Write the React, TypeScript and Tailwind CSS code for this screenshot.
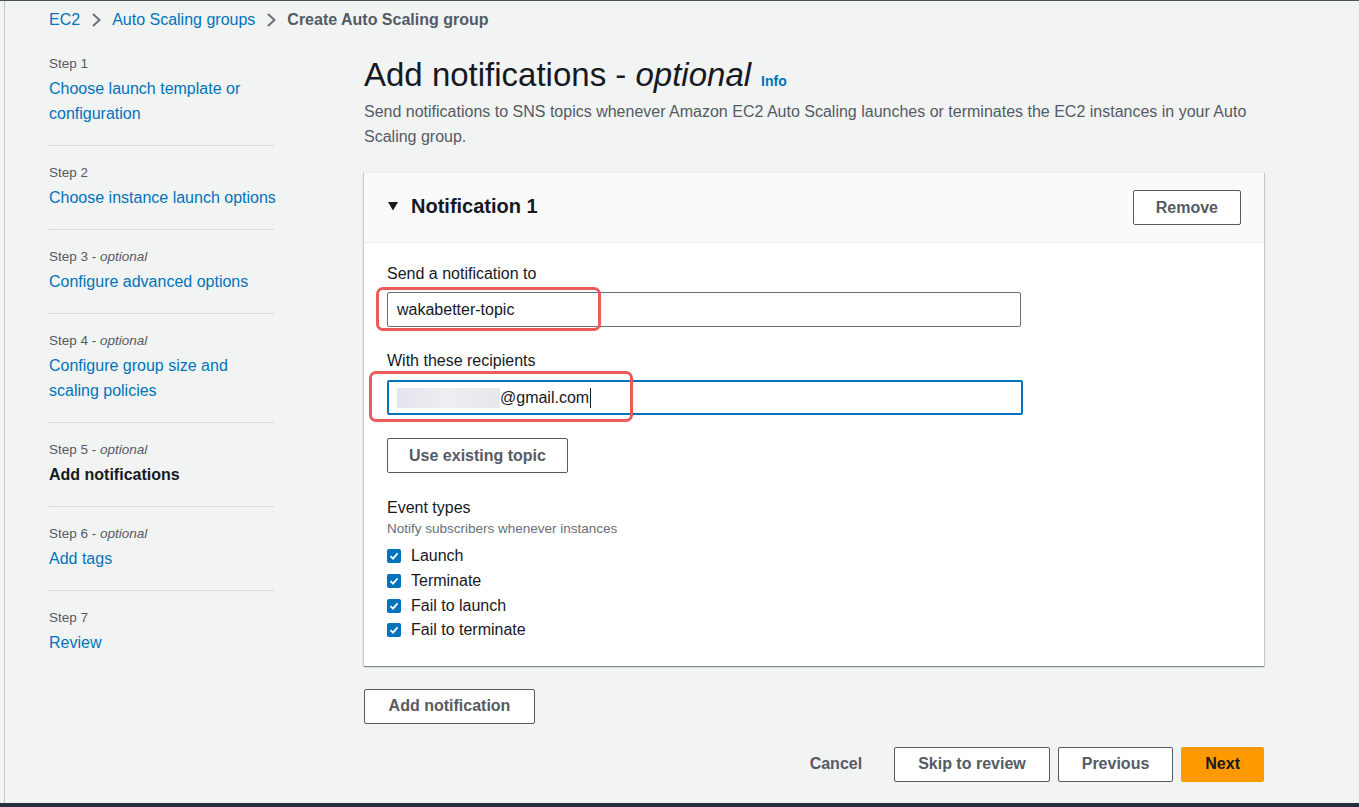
import React from "react";

const steps: { label: string; optional: boolean; lines: string[]; active?: boolean }[] = [
  { label: "Step 1", optional: false, lines: ["Choose launch template or", "configuration"] },
  { label: "Step 2", optional: false, lines: ["Choose instance launch options"] },
  { label: "Step 3", optional: true, lines: ["Configure advanced options"] },
  { label: "Step 4", optional: true, lines: ["Configure group size and", "scaling policies"] },
  { label: "Step 5", optional: true, lines: ["Add notifications"], active: true },
  { label: "Step 6", optional: true, lines: ["Add tags"] },
  { label: "Step 7", optional: false, lines: ["Review"] },
];

function Chevron() {
  return (
    <svg width="12" height="16" viewBox="0 0 12 16" fill="none">
      <path d="M3 2 L9.5 8 L3 14" stroke="#687078" strokeWidth="2" />
    </svg>
  );
}

function Check() {
  return (
    <span className="w-[14px] h-[14px] rounded-[2px] bg-[#0073bb] flex items-center justify-center">
      <svg width="10" height="10" viewBox="0 0 10 10" fill="none">
        <path d="M1.5 5.2 L4 7.6 L8.6 2.4" stroke="#ffffff" strokeWidth="1.8" />
      </svg>
    </span>
  );
}

const btn =
  "h-[35px] border border-[#545b64] rounded-[2px] bg-white text-[16px] font-bold text-[#545b64] flex items-center justify-center";

export default function App() {
  return (
    <div className="w-[1359px] h-[807px] bg-[#f2f3f3] flex flex-col overflow-hidden font-['Liberation_Sans',Arial,sans-serif] text-[#16191f]">
      <div className="h-px bg-[#4b5259]" />
      <div className="flex-1 flex min-h-0">
        <div className="w-[4px] bg-[#f2f3f3]" />
        <div className="w-px bg-[#c4c7ca]" />
        <div className="flex-1 pl-[44px]">
          {/* Breadcrumb */}
          <div className="pt-[7px] h-[31px] flex items-center gap-[10px] text-[16px] leading-[24px]">
            <span className="text-[#0073bb]">EC2</span>
            <Chevron />
            <span className="text-[#0073bb]">Auto Scaling groups</span>
            <Chevron />
            <span className="text-[#545b64] font-bold">Create Auto Scaling group</span>
          </div>

          <div className="flex mt-[19px]">
            {/* Sidebar */}
            <div className="w-[225px] flex flex-col">
              {steps.map((s, i) => (
                <div
                  key={s.label}
                  className={`${i === 0 ? "pt-[1px]" : "pt-[15px]"} pb-[19px] ${i < steps.length - 1 ? "border-b border-[#d5dbdb]" : ""}`}
                >
                  <div className="text-[13.5px] leading-[24px] text-[#545b64] whitespace-nowrap">
                    {s.label}
                    {s.optional && (
                      <>
                        {" - "}
                        <i>optional</i>
                      </>
                    )}
                  </div>
                  {s.lines.map((l) => (
                    <div
                      key={l}
                      className={`text-[16px] leading-[25px] whitespace-nowrap ${s.active ? "font-bold text-[#16191f]" : "text-[#0073bb]"}`}
                    >
                      {l}
                    </div>
                  ))}
                </div>
              ))}
            </div>

            {/* Main */}
            <div className="w-[900px] ml-[90px] pt-[4px]">
              <div className="flex items-baseline">
                <h1 className="text-[33px] leading-[40px] font-normal">
                  Add notifications - <i>optional</i>
                </h1>
                <span className="ml-[10px] text-[14px] font-bold text-[#0073bb]">Info</span>
              </div>
              <p className="mt-[4px] text-[16px] leading-[25px] text-[#545b64]">
                Send notifications to SNS topics whenever Amazon EC2 Auto Scaling launches or terminates the EC2 instances in your Auto Scaling group.
              </p>

              {/* Container */}
              <div className="mt-[23px] bg-white border-t border-[#eaeded] shadow-[0_1px_1px_0_rgba(0,28,36,0.3),1px_1px_1px_0_rgba(0,28,36,0.15),-1px_1px_1px_0_rgba(0,28,36,0.15)]">
                <div className="h-[70px] bg-[#fafafa] border-b border-[#eaeded] flex items-center justify-between pl-[24px] pr-[23px]">
                  <div className="flex items-center gap-[13px] mb-[3px]">
                    <svg width="10" height="9" viewBox="0 0 10 9">
                      <path d="M0 0 H10 L5 8.5 Z" fill="#16191f" />
                    </svg>
                    <span className="text-[20px] font-bold leading-[28px]">Notification 1</span>
                  </div>
                  <button className={`${btn} px-[22px]`}>Remove</button>
                </div>

                <div className="pl-[23px] pt-[19px] pb-[23px]">
                  <div className="text-[16px] leading-[24px]">Send a notification to</div>
                  <div className="relative mt-[6px] w-[634px]">
                    <div className="h-[35px] border border-[#687078] rounded-[2px] px-[9px] flex items-center text-[16px]">
                      wakabetter-topic
                    </div>
                    <div className="absolute left-[-11px] top-[-5px] w-[225px] h-[44px] border-[3.5px] border-[#ec5a5a] rounded-[7px]" />
                  </div>

                  <div className="mt-[22px] text-[16px] leading-[24px]">With these recipients</div>
                  <div className="relative mt-[7px] w-[636px]">
                    <div className="h-[35px] border-2 border-[#0073bb] rounded-[2px] px-[8px] flex items-center text-[16px]">
                      <span className="w-[103px] h-[20px] bg-gradient-to-r from-[#e3e6ec] via-[#eceef1] to-[#e6e8ec]" />
                      <span>@gmail.com</span>
                      <span className="ml-[1px] w-px h-[20px] bg-[#16191f]" />
                    </div>
                    <div className="absolute left-[-18px] top-[-9px] w-[264px] h-[51px] border-[3.5px] border-[#ec5a5a] rounded-[7px]" />
                  </div>

                  <button className={`${btn} mt-[23px] w-[181px]`}>Use existing topic</button>

                  <div className="mt-[24px] text-[16px] leading-[22px]">Event types</div>
                  <div className="text-[13.5px] leading-[20px] text-[#687078]">Notify subscribers whenever instances</div>
                  <div className="mt-[5px] flex flex-col">
                    {["Launch", "Terminate", "Fail to launch", "Fail to terminate"].map((e) => (
                      <div key={e} className="h-[24.7px] flex items-center gap-[10px] text-[16px]">
                        <Check />
                        <span>{e}</span>
                      </div>
                    ))}
                  </div>
                </div>
              </div>

              <button className={`${btn} mt-[23px] w-[171px]`}>Add notification</button>

              <div className="mt-[23px] flex justify-end gap-[8px]">
                <button className="h-[35px] px-[24px] text-[16px] font-bold text-[#545b64]">Cancel</button>
                <button className={`${btn} px-[23px]`}>Skip to review</button>
                <button className={`${btn} px-[23px]`}>Previous</button>
                <button className="h-[35px] px-[24px] rounded-[2px] bg-[#ff9900] text-[16px] font-bold text-[#16191f]">Next</button>
              </div>
            </div>
          </div>
        </div>
      </div>
      <div className="h-[4px] bg-[#232f3e]" />
    </div>
  );
}
